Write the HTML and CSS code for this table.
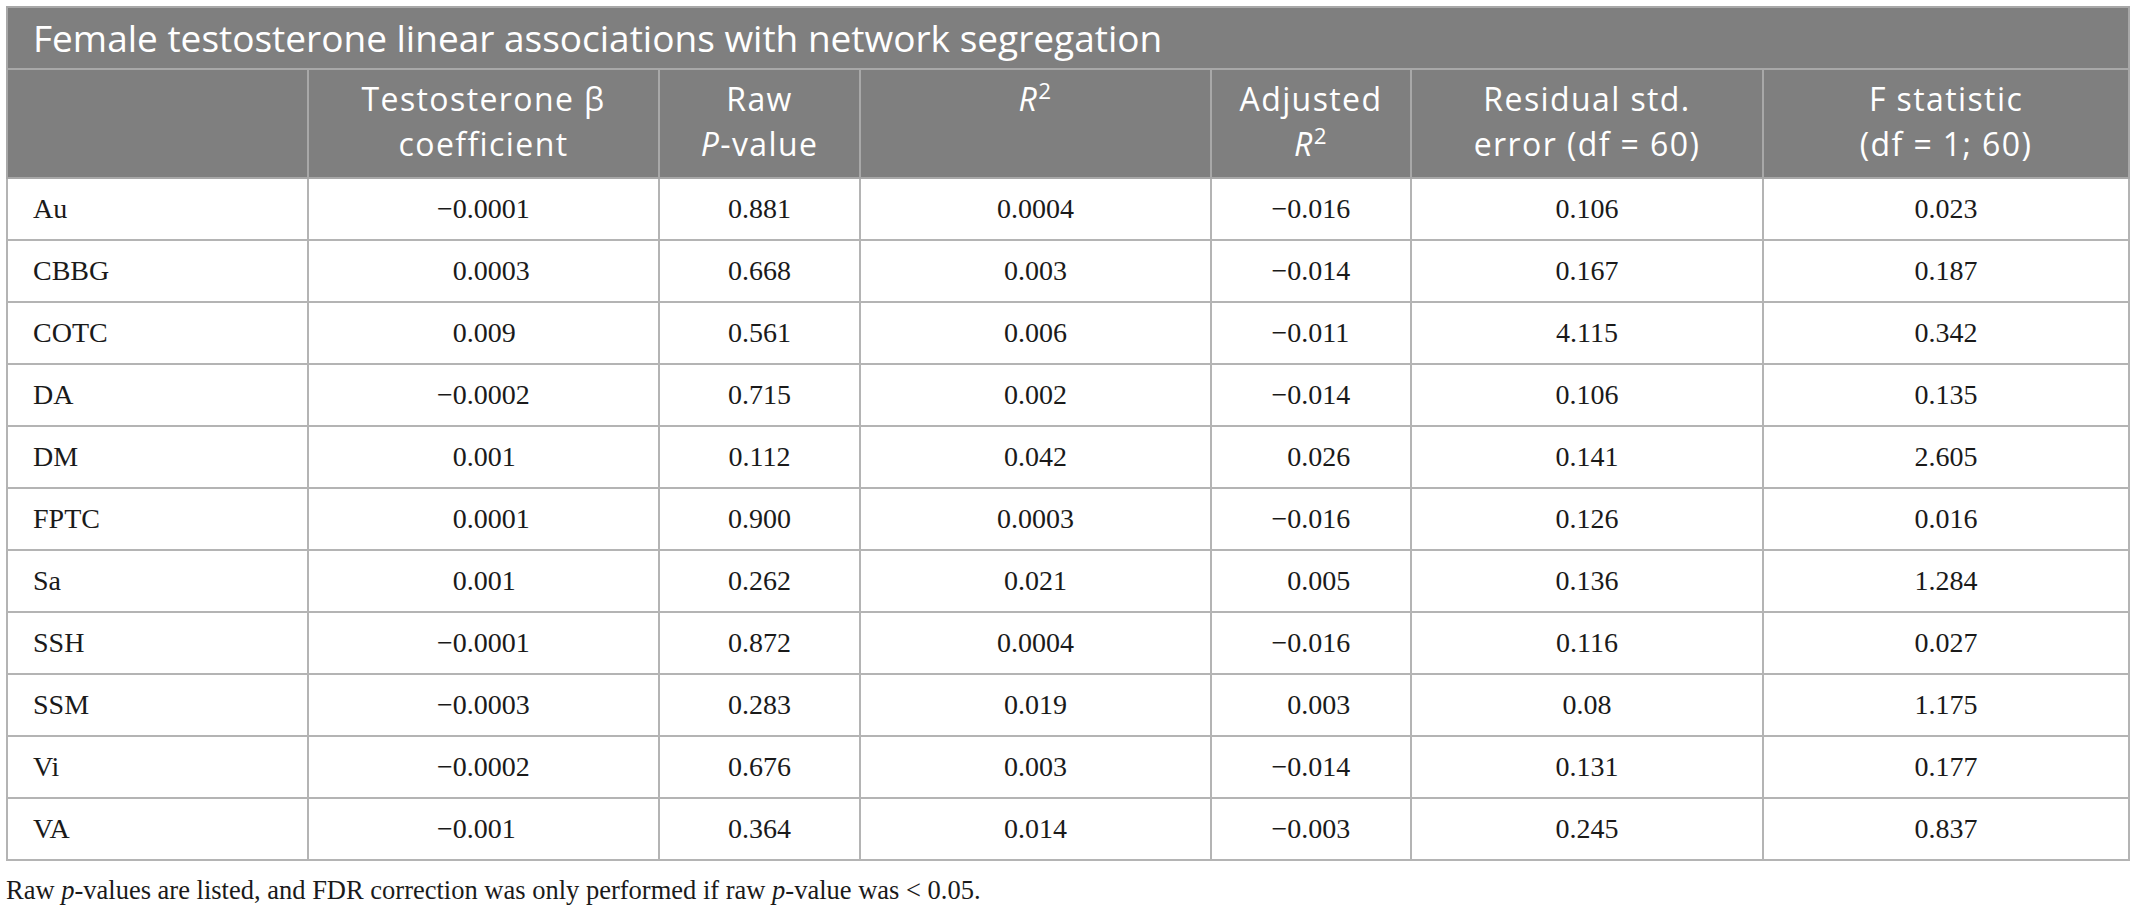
FILE: index.html
```html
<!DOCTYPE html>
<html lang="en">
<head>
    <meta charset="UTF-8">
    <meta name="viewport" content="width=device-width, initial-scale=1.0">
    <title>Female testosterone linear associations with network segregation</title>
    <link rel="stylesheet" href="styles.css">
</head>
<body>
    <div class="table-wrap">
        <table class="data-table">
            <colgroup>
                <col style="width: 301px">
                <col style="width: 351px">
                <col style="width: 201px">
                <col style="width: 351px">
                <col style="width: 200px">
                <col style="width: 352px">
                <col style="width: 366px">
            </colgroup>
            <thead>
                <tr class="title-row">
                    <th colspan="7">Female testosterone linear associations with network segregation</th>
                </tr>
                <tr class="head-row">
                    <th></th>
                    <th>Testosterone β<br>coefficient</th>
                    <th>Raw<br><i>P</i>-value</th>
                    <th><i>R</i><sup>2</sup></th>
                    <th>Adjusted<br><i>R</i><sup>2</sup></th>
                    <th>Residual std.<br>error (df = 60)</th>
                    <th>F statistic<br>(df = 1; 60)</th>
                </tr>
            </thead>
            <tbody>
                <tr>
                    <td>Au</td>
                    <td class="beta"><span class="num">−0.0001</span></td>
                    <td>0.881</td>
                    <td>0.0004</td>
                    <td class="adj"><span class="num">−0.016</span></td>
                    <td>0.106</td>
                    <td>0.023</td>
                </tr>
                <tr>
                    <td>CBBG</td>
                    <td class="beta"><span class="num pos">0.0003</span></td>
                    <td>0.668</td>
                    <td>0.003</td>
                    <td class="adj"><span class="num">−0.014</span></td>
                    <td>0.167</td>
                    <td>0.187</td>
                </tr>
                <tr>
                    <td>COTC</td>
                    <td class="beta"><span class="num pos">0.009</span></td>
                    <td>0.561</td>
                    <td>0.006</td>
                    <td class="adj"><span class="num">−0.011</span></td>
                    <td>4.115</td>
                    <td>0.342</td>
                </tr>
                <tr>
                    <td>DA</td>
                    <td class="beta"><span class="num">−0.0002</span></td>
                    <td>0.715</td>
                    <td>0.002</td>
                    <td class="adj"><span class="num">−0.014</span></td>
                    <td>0.106</td>
                    <td>0.135</td>
                </tr>
                <tr>
                    <td>DM</td>
                    <td class="beta"><span class="num pos">0.001</span></td>
                    <td>0.112</td>
                    <td>0.042</td>
                    <td class="adj"><span class="num pos">0.026</span></td>
                    <td>0.141</td>
                    <td>2.605</td>
                </tr>
                <tr>
                    <td>FPTC</td>
                    <td class="beta"><span class="num pos">0.0001</span></td>
                    <td>0.900</td>
                    <td>0.0003</td>
                    <td class="adj"><span class="num">−0.016</span></td>
                    <td>0.126</td>
                    <td>0.016</td>
                </tr>
                <tr>
                    <td>Sa</td>
                    <td class="beta"><span class="num pos">0.001</span></td>
                    <td>0.262</td>
                    <td>0.021</td>
                    <td class="adj"><span class="num pos">0.005</span></td>
                    <td>0.136</td>
                    <td>1.284</td>
                </tr>
                <tr>
                    <td>SSH</td>
                    <td class="beta"><span class="num">−0.0001</span></td>
                    <td>0.872</td>
                    <td>0.0004</td>
                    <td class="adj"><span class="num">−0.016</span></td>
                    <td>0.116</td>
                    <td>0.027</td>
                </tr>
                <tr>
                    <td>SSM</td>
                    <td class="beta"><span class="num">−0.0003</span></td>
                    <td>0.283</td>
                    <td>0.019</td>
                    <td class="adj"><span class="num pos">0.003</span></td>
                    <td>0.08</td>
                    <td>1.175</td>
                </tr>
                <tr>
                    <td>Vi</td>
                    <td class="beta"><span class="num">−0.0002</span></td>
                    <td>0.676</td>
                    <td>0.003</td>
                    <td class="adj"><span class="num">−0.014</span></td>
                    <td>0.131</td>
                    <td>0.177</td>
                </tr>
                <tr>
                    <td>VA</td>
                    <td class="beta"><span class="num">−0.001</span></td>
                    <td>0.364</td>
                    <td>0.014</td>
                    <td class="adj"><span class="num">−0.003</span></td>
                    <td>0.245</td>
                    <td>0.837</td>
                </tr>
            </tbody>
        </table>

        <p class="footnote">Raw <i>p</i>-values are listed, and FDR correction was only performed if raw <i>p</i>-value was &lt; 0.05.</p>
    </div>
</body>
</html>
```

FILE: styles.css
```css
* {
    margin: 0;
    padding: 0;
    box-sizing: border-box;
}

body {
    background: #ffffff;
    font-family: 'Liberation Serif', 'Times New Roman', serif;
    color: #1a1a1a;
}

.table-wrap {
    padding: 6px 7px 0 6px;
}

.data-table {
    width: 2122px;
    table-layout: fixed;
    border-collapse: collapse;
    border: 2px solid #b4b4b4;
}

/* header */

.data-table thead th {
    background: #7f7f7f;
    color: #ffffff;
    font-family: 'Open Sans', 'Noto Sans', sans-serif;
    font-weight: 400;
    border: 2px solid #a8a8a8;
}

.title-row th {
    height: 62px;
    font-size: 37px;
    text-align: left;
    padding: 0 0 2px 25px;
    vertical-align: middle;
}

.head-row th {
    height: 109px;
    font-size: 32px;
    line-height: 45px;
    letter-spacing: 1.4px;
    text-align: center;
    vertical-align: top;
    padding: 6px 8px 0;
}

.head-row sup {
    font-size: 0.7em;
    line-height: 0;
    vertical-align: 0.55em;
}

/* body */

.data-table td {
    height: 62px;
    border: 2px solid #b4b4b4;
    font-size: 28px;
    text-align: center;
    vertical-align: middle;
    padding: 0 10px;
}

.data-table td:first-child {
    text-align: left;
    padding-left: 25px;
}

.num {
    display: inline-block;
    text-align: left;
}

.num.pos {
    padding-left: 0.564em;
}

.beta .num {
    width: 3.32em;
}

.adj .num {
    width: 2.82em;
}

/* footnote */

.footnote {
    margin-top: 14px;
    font-size: 26.5px;
    line-height: 30px;
    color: #1a1a1a;
}
```
